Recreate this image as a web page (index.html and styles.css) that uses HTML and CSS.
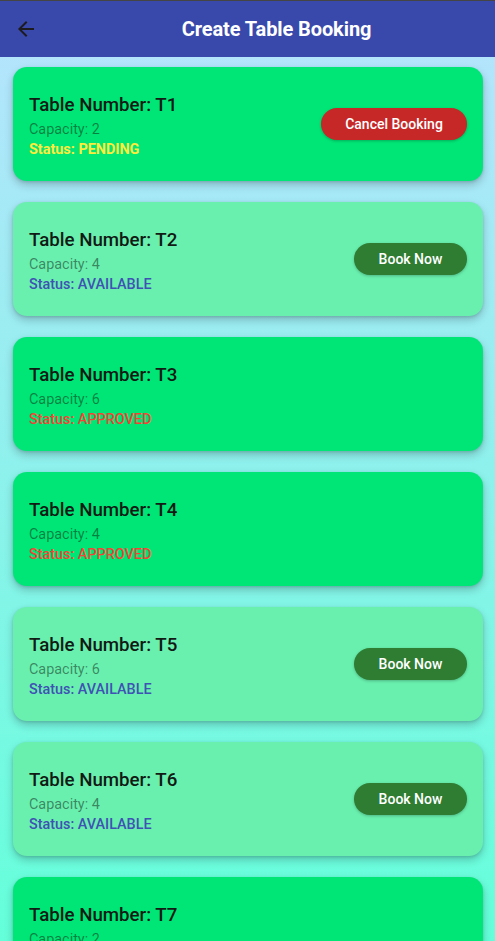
FILE: index.html
```html
<!DOCTYPE html>
<html>
<head>
<meta charset="utf-8">
<link rel="stylesheet" href="styles.css">
</head>
<body>
<div class="screen">
  <header class="appbar">
    <button class="back" aria-label="Back">
      <svg viewBox="0 0 24 24" width="24" height="24"><path d="M20 11H7.83l5.59-5.59L12 4l-8 8 8 8 1.41-1.41L7.83 13H20v-2z" fill="#1d1b20"/></svg>
    </button>
    <h1 class="title">Create Table Booking</h1>
  </header>
  <main class="list">
    <div class="card booked">
      <div class="info">
        <div class="name">Table Number: T1</div>
        <div class="cap">Capacity: 2</div>
        <div class="status pending">Status: PENDING</div>
      </div>
      <button class="btn cancel">Cancel Booking</button>
    </div>
    <div class="card available">
      <div class="info">
        <div class="name">Table Number: T2</div>
        <div class="cap">Capacity: 4</div>
        <div class="status avail">Status: AVAILABLE</div>
      </div>
      <button class="btn book">Book Now</button>
    </div>
    <div class="card booked">
      <div class="info">
        <div class="name">Table Number: T3</div>
        <div class="cap">Capacity: 6</div>
        <div class="status approved">Status: APPROVED</div>
      </div>
    </div>
    <div class="card booked">
      <div class="info">
        <div class="name">Table Number: T4</div>
        <div class="cap">Capacity: 4</div>
        <div class="status approved">Status: APPROVED</div>
      </div>
    </div>
    <div class="card available">
      <div class="info">
        <div class="name">Table Number: T5</div>
        <div class="cap">Capacity: 6</div>
        <div class="status avail">Status: AVAILABLE</div>
      </div>
      <button class="btn book">Book Now</button>
    </div>
    <div class="card available">
      <div class="info">
        <div class="name">Table Number: T6</div>
        <div class="cap">Capacity: 4</div>
        <div class="status avail">Status: AVAILABLE</div>
      </div>
      <button class="btn book">Book Now</button>
    </div>
    <div class="card booked">
      <div class="info">
        <div class="name">Table Number: T7</div>
        <div class="cap">Capacity: 2</div>
        <div class="status approved">Status: APPROVED</div>
      </div>
    </div>
  </main>
</div>
</body>
</html>
```
FILE: styles.css
```css
* { box-sizing: border-box; }
html, body { margin: 0; padding: 0; }
body {
  font-family: Roboto, "Noto Sans", sans-serif;
  width: 495px;
  height: 941px;
  overflow: hidden;
  background: #b3e5fc;
}
.screen {
  height: 941px;
  display: flex;
  flex-direction: column;
  border-top: 1px solid #454545;
  overflow: hidden;
}
.appbar {
  height: 56px;
  flex: none;
  background: #3949ab;
  display: flex;
  align-items: center;
  position: relative;
  z-index: 2;
}
.back {
  width: 56px;
  height: 56px;
  border: 0;
  background: none;
  padding: 0;
  display: flex;
  align-items: center;
  justify-content: center;
  flex: none;
}
.back svg { display: block; margin-left: -4px; margin-top: 0px; }
.title {
  flex: 1;
  margin: 0;
  text-align: center;
  color: #fff;
  font-size: 20px;
  font-weight: 700;
  letter-spacing: -0.1px;
  padding-left: 2px;
}
.list {
  flex: 1;
  overflow: hidden;
  background: linear-gradient(180deg, #b3e5fc 0%, #64ffda 100%);
  padding: 10px 12px 0 13px;
  display: flex;
  flex-direction: column;
  gap: 21px;
}
.card {
  flex: none;
  height: 114px;
  border-radius: 14px;
  padding: 0 16px;
  display: flex;
  align-items: center;
  justify-content: space-between;
  box-shadow: 0 4px 8px rgba(0,0,0,0.22), 0 1px 3px rgba(0,0,0,0.12);
}
.booked { background: #00e676; }
.available { background: #69f0ae; }
.info { display: flex; flex-direction: column; margin-top: 4px; }
.name {
  font-size: 18.7px;
  line-height: 25px;
  color: #111a14;
  font-weight: 500;
}
.cap {
  font-size: 14.4px;
  line-height: 21px;
  color: rgba(0,0,0,0.45);
  margin-top: 1px;
}
.status {
  font-size: 14.4px;
  line-height: 20px;
  font-weight: 500;
}
.pending { color: #ffeb3b; font-weight: 700; }
.avail { color: #3f51b5; }
.approved { color: #f44336; }
.btn {
  border: 0;
  height: 32px;
  border-radius: 16px;
  color: #fff;
  font-family: Roboto, sans-serif;
  font-size: 14px;
  font-weight: 500;
  padding: 0 12px;
  box-shadow: 0 1px 3px rgba(0,0,0,0.25);
}
.cancel { background: #c62828; width: 146px; }
.book { background: #2e7d32; width: 113px; }
```
